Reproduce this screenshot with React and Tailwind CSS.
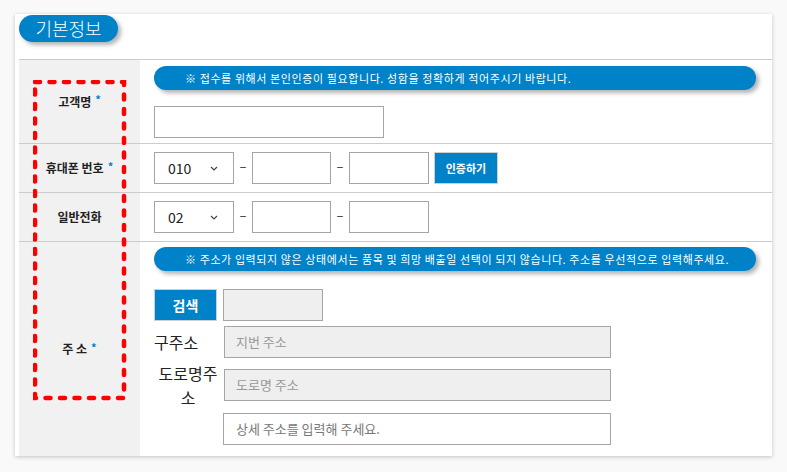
import React from 'react';

const FONT = "font-['Noto_Sans_CJK_KR','Noto_Sans',sans-serif]";
const BLUE = 'bg-[#0082c9]';

const Star = () => <span className="ml-[4px] text-[11px] text-[#0082c9] relative -top-[2px]">*</span>;

const Chevron = () => (
  <svg width="8" height="5" viewBox="0 0 8 5" className="ml-auto mr-[15px]">
    <path d="M1 1l3 3 3-3" fill="none" stroke="#444" strokeWidth="1.2" />
  </svg>
);

const Select = ({ value }) => (
  <div className="flex items-center w-[80px] h-[32px] border border-[#a5a5a5] bg-white pl-[13px] text-[14px] text-[#222]">
    {value}
    <Chevron />
  </div>
);

const Box = ({ w = 'w-[79px]' }) => <div className={`${w} h-[32px] border border-[#a5a5a5] bg-white`} />;

const Dash = () => <span className="w-[18px] text-center text-[13px] text-[#333] -mt-[4px]">–</span>;

const Notice = ({ children }) => (
  <div className={`w-[602px] h-[24px] rounded-full ${BLUE} text-white text-[11px] tracking-[0.6px] leading-[24px] pl-[31px] shadow-[3px_3px_4px_rgba(0,0,0,0.3)] whitespace-nowrap`}>
    {children}
  </div>
);

const Label = ({ children }) => (
  <div className="w-[121px] shrink-0 bg-[#f1f1f1] flex items-center justify-center text-[12px] font-bold text-[#222]">
    {children}
  </div>
);

export default function App() {
  return (
    <div className={`w-[787px] h-[472px] bg-[#f9f9f9] pt-[14px] pl-[15px] ${FONT}`}>
      <div className="relative w-[757px] h-[442px] bg-white pl-[4px] shadow-[0_1px_4px_rgba(0,0,0,0.22)] flex flex-col">
        {/* header */}
        <div className="h-[46px] shrink-0 border-b border-[#cccccc]">
          <div className={`mt-[1px] w-[99px] h-[27px] rounded-full ${BLUE} text-white text-[18px] font-light leading-[27px] text-center shadow-[3px_3px_4px_rgba(0,0,0,0.3)]`}>
            기본정보
          </div>
        </div>

        {/* 고객명 */}
        <div className="h-[84px] shrink-0 flex border-b border-[#cccccc]">
          <Label>고객명<Star /></Label>
          <div className="pl-[14px] pt-[6px]">
            <Notice>※ 접수를 위해서 본인인증이 필요합니다. 성함을 정확하게 적어주시기 바랍니다.</Notice>
            <div className="mt-[16px] w-[230px] h-[32px] border border-[#a5a5a5] bg-white" />
          </div>
        </div>

        {/* 휴대폰 번호 */}
        <div className="h-[49px] shrink-0 flex border-b border-[#cccccc]">
          <Label>휴대폰 번호<Star /></Label>
          <div className="pl-[14px] flex items-center">
            <Select value="010" />
            <Dash />
            <Box />
            <Dash />
            <Box w="w-[80px]" />
            <button className={`ml-[5px] w-[64px] h-[32px] ${BLUE} border border-[#cfcfcf] text-white text-[11px] font-bold`}>
              인증하기
            </button>
          </div>
        </div>

        {/* 일반전화 */}
        <div className="h-[49px] shrink-0 flex border-b border-[#cccccc]">
          <Label>일반전화</Label>
          <div className="pl-[14px] flex items-center">
            <Select value="02" />
            <Dash />
            <Box />
            <Dash />
            <Box w="w-[80px]" />
          </div>
        </div>

        {/* 주소 */}
        <div className="flex-1 flex">
          <Label>주 소<Star /></Label>
          <div className="pl-[14px] pt-[5px]">
            <Notice>※ 주소가 입력되지 않은 상태에서는 품목 및 희망 배출일 선택이 되지 않습니다. 주소를 우선적으로 입력해주세요.</Notice>
            <div className="mt-[18px] flex gap-[6px]">
              <button className={`w-[63px] h-[32px] ${BLUE} border border-[#cfcfcf] text-white text-[14px] font-bold`}>검색</button>
              <div className="w-[100px] h-[32px] border border-[#a5a5a5] bg-[#efefef]" />
            </div>
            <div className="mt-[5px] flex items-center">
              <div className="w-[70px] text-[16px] text-[#222]">구주소</div>
              <div className="w-[387px] h-[32px] border border-[#a5a5a5] bg-[#efefef] pl-[11px] text-[13px] leading-[30px] text-[#999]">지번 주소</div>
            </div>
            <div className="mt-[3px] flex items-center">
              <div className="w-[70px] pr-[2px] text-[16px] leading-[24px] text-center text-[#222]">도로명주소</div>
              <div className="w-[387px] h-[32px] border border-[#a5a5a5] bg-[#efefef] pl-[11px] text-[13px] leading-[30px] text-[#999]">도로명 주소</div>
            </div>
            <div className="mt-[4px] ml-[69px] w-[388px] h-[32px] border border-[#a5a5a5] bg-white pl-[12px] text-[13px] leading-[30px] text-[#777]">
              상세 주소를 입력해 주세요.
            </div>
          </div>
        </div>

        {/* red dashed annotation */}
        <svg className="absolute left-[18px] top-[66px] pointer-events-none" width="95" height="322" viewBox="0 0 95 322">
          <rect x="2" y="2" width="89" height="316" fill="none" stroke="#ff0000" strokeWidth="4.5"
            strokeDasharray="5 9.5" strokeLinecap="round" />
        </svg>
      </div>
    </div>
  );
}
